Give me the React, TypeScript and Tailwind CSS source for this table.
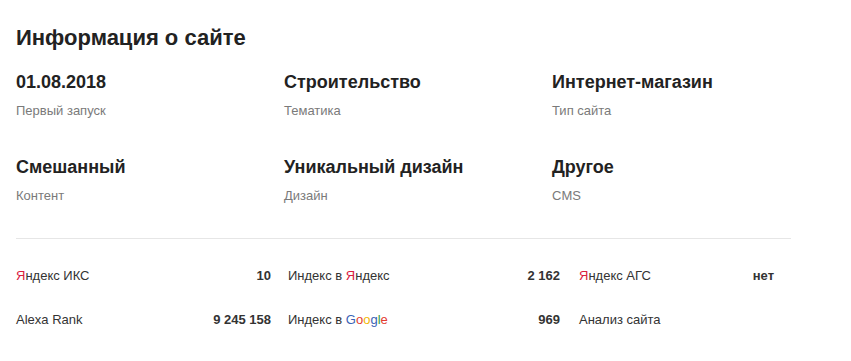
import React from "react";

const Y = () => <span className="text-[#d9203f]">Я</span>;

const Google = () => (
  <>
    <span className="text-[#3b62b5]">G</span>
    <span className="text-[#e33c2f]">o</span>
    <span className="text-[#f2b705]">o</span>
    <span className="text-[#3b62b5]">g</span>
    <span className="text-[#2f9a48]">l</span>
    <span className="text-[#e33c2f]">e</span>
  </>
);

function Info({ value, label }: { value: string; label: string }) {
  return (
    <div className="flex flex-col">
      <div className="text-[18px] leading-[24px] font-bold text-[#222]">{value}</div>
      <div className="mt-[9px] text-[13px] leading-[16px] text-[#7a7a7a]">{label}</div>
    </div>
  );
}

function Stat({ label, value, w }: { label: React.ReactNode; value: string; w: string }) {
  return (
    <div className={`flex items-center justify-between ${w}`}>
      <span className="text-[13px] leading-[20px] text-[#333]">{label}</span>
      <span className="text-[13px] leading-[20px] font-bold text-[#333]">{value}</span>
    </div>
  );
}

export default function App() {
  return (
    <div className="bg-white w-[851px] h-[361px] pl-4 pt-6" style={{ fontFamily: '"Liberation Sans", Arial, sans-serif' }}>
      <h2 className="text-[22px] leading-[28px] font-bold text-[#222]">Информация о сайте</h2>
      <div className="mt-[18px] grid grid-cols-[268px_268px_268px] gap-y-[36px]">
        <Info value="01.08.2018" label="Первый запуск" />
        <Info value="Строительство" label="Тематика" />
        <Info value="Интернет-магазин" label="Тип сайта" />
        <Info value="Смешанный" label="Контент" />
        <Info value="Уникальный дизайн" label="Дизайн" />
        <Info value="Другое" label="CMS" />
      </div>
      <div className="mt-[34px] w-[775px] h-px bg-[#e6e6e6]" />
      <div className="mt-[27px] flex flex-col gap-6">
        <div className="flex">
          <Stat w="w-[255px]" label={<><Y />ндекс ИКС</>} value="10" />
          <div className="w-[17px]" />
          <Stat w="w-[272px]" label={<>Индекс в <Y />ндекс</>} value="2 162" />
          <div className="w-[19px]" />
          <Stat w="w-[195px]" label={<><Y />ндекс АГС</>} value="нет" />
        </div>
        <div className="flex">
          <Stat w="w-[255px]" label="Alexa Rank" value="9 245 158" />
          <div className="w-[17px]" />
          <Stat w="w-[272px]" label={<>Индекс в <Google /></>} value="969" />
          <div className="w-[19px]" />
          <Stat w="w-[195px]" label="Анализ сайта" value="" />
        </div>
      </div>
    </div>
  );
}
